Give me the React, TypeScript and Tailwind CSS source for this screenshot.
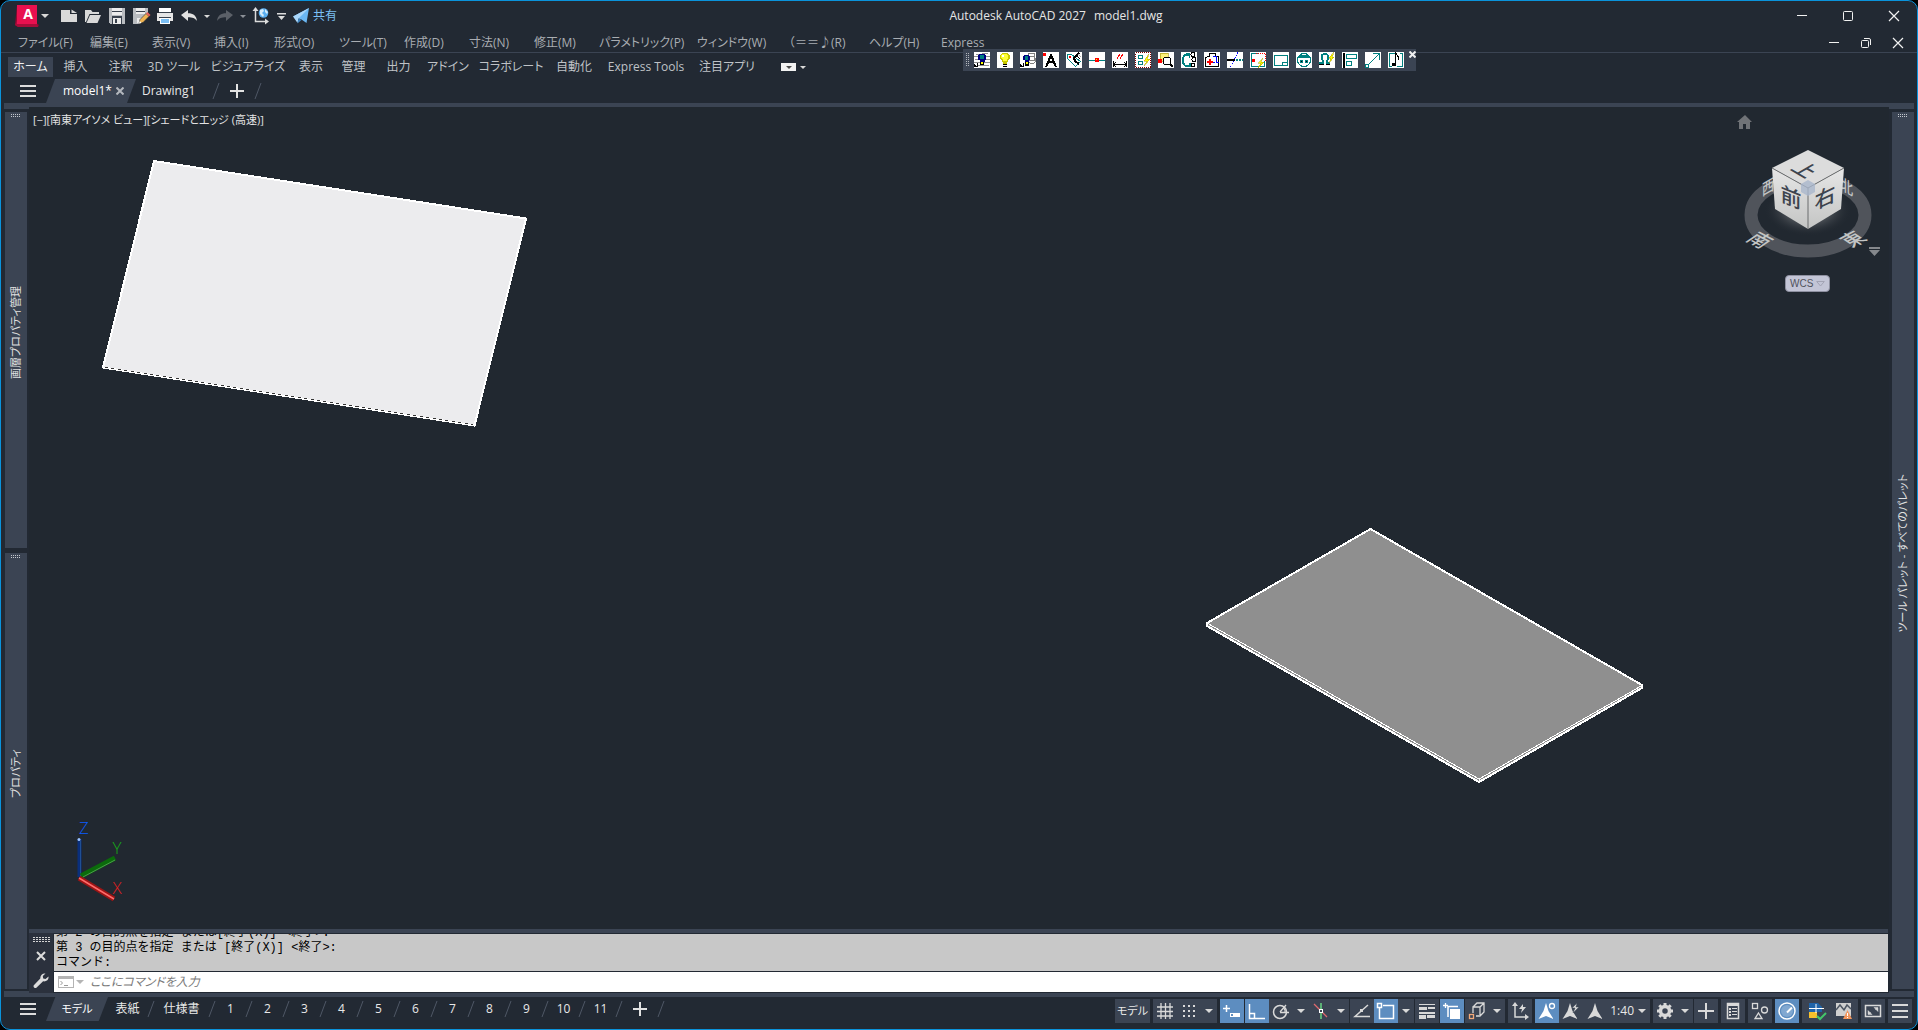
// src/App.tsx
import type { ReactNode } from "react";

const MENUS = [
  { label: "ファイル(F)", w: "w-[72px]" },
  { label: "編集(E)", w: "w-[62px]" },
  { label: "表示(V)", w: "w-[62px]" },
  { label: "挿入(I)", w: "w-[60px]" },
  { label: "形式(O)", w: "w-[65px]" },
  { label: "ツール(T)", w: "w-[65px]" },
  { label: "作成(D)", w: "w-[65px]" },
  { label: "寸法(N)", w: "w-[65px]" },
  { label: "修正(M)", w: "w-[65px]" },
  { label: "パラメトリック(P)", w: "w-[98px]" },
  { label: "ウィンドウ(W)", w: "w-[86px]" },
  { label: "（＝＝♪(R)", w: "w-[86px]", wide: true },
  { label: "ヘルプ(H)", w: "w-[72px]" },
  { label: "Express", w: "w-[72px]" },
];

const RIBBON = [
  { label: "ホーム", w: "w-[45px]" },
  { label: "挿入", w: "w-[45px]" },
  { label: "注釈", w: "w-[45px]" },
  { label: "3D ツール", w: "w-[62px]" },
  { label: "ビジュアライズ", w: "w-[86px]" },
  { label: "表示", w: "w-[40px]" },
  { label: "管理", w: "w-[45px]" },
  { label: "出力", w: "w-[45px]" },
  { label: "アドイン", w: "w-[54px]" },
  { label: "コラボレート", w: "w-[72px]" },
  { label: "自動化", w: "w-[54px]" },
  { label: "Express Tools", w: "w-[90px]" },
  { label: "注目アプリ", w: "w-[72px]" },
];

const LAYOUTS = ["1", "2", "3", "4", "5", "6", "7", "8", "9", "10", "11"];

/* ---------- shared bits ---------- */

function Icon({ children, crisp }: { children: ReactNode; crisp?: boolean }) {
  return (
    <svg
      viewBox="0 0 24 24"
      className="h-6 w-6 shrink-0"
      fill="none"
      stroke="none"
      shapeRendering={crisp ? "crispEdges" : "auto"}
      aria-hidden="true"
    >
      {children}
    </svg>
  );
}

function Caret({ color = "#d9d9d9", small }: { color?: string; small?: boolean }) {
  return (
    <svg
      viewBox="0 0 8 4"
      className={small ? "h-[3px] w-[6px]" : "h-1 w-2"}
      aria-hidden="true"
    >
      <path d="M0 0h8L4 4z" fill={color} />
    </svg>
  );
}

function Slash() {
  return (
    <svg viewBox="0 0 8 16" className="h-4 w-2 shrink-0" aria-hidden="true">
      <path d="M1 16L7 0" stroke="#4f5866" strokeWidth="1" />
    </svg>
  );
}

function Burger({ label }: { label: string }) {
  return (
    <button
      aria-label={label}
      className="flex h-6 w-[45px] shrink-0 items-center justify-center pl-[9px]"
    >
      <svg viewBox="0 0 16 12" className="h-3 w-4" shapeRendering="crispEdges">
        <path d="M0 0h16v2H0zM0 5h16v2H0zM0 10h16v2H0z" fill="#dcdcdc" />
      </svg>
    </button>
  );
}

function Plus() {
  return (
    <svg viewBox="0 0 14 14" className="h-[14px] w-[14px]" shapeRendering="crispEdges">
      <path d="M6 0h2v14H6zM0 6h14v2H0z" fill="#e2e2e2" />
    </svg>
  );
}

function Grip({ color = "#c5c9cf" }: { color?: string }) {
  return (
    <svg viewBox="0 0 10 4" className="h-1 w-[10px]" shapeRendering="crispEdges">
      {[0, 2, 4, 6, 8].map((x) => (
        <g key={x} fill={color}>
          <rect x={x} y="0" width="1" height="1" />
          <rect x={x} y="2" width="1" height="1" />
        </g>
      ))}
    </svg>
  );
}

/* ---------- title bar ---------- */

function TitleBar() {
  return (
    <header className="flex h-[30px] items-center">
      <div className="flex w-[49.5%] items-center pl-[14px]">
        <button aria-label="アプリケーション メニュー" className="flex items-center">
          <svg viewBox="0 0 24 22" className="h-[22px] w-6">
            <path d="M2 0h20v18.500L24 20l-1 2H3L0 20z" fill="#8d0a30" />
            <path d="M2 0h20v19H2z" fill="#e8104f" />
            <path d="M0 20l2-5v4h20l1 3H3z" fill="#a70d3a" />
            <text
              x="13"
              y="14"
              textAnchor="middle"
              fontSize="14"
              fontWeight="700"
              fill="#fff"
              className="font-['Open_Sans',sans-serif]"
            >
              A
            </text>
          </svg>
          <span className="flex w-3 justify-center">
            <Caret />
          </span>
        </button>
        <div className="flex items-center pl-[6px]">
          <button aria-label="新規">
            <Icon>
              <path d="M4 6h9v4h7v8H4z" fill="#d9d9d9" />
              <path d="M14.500 5.500L20 9h-5.500z" fill="#d9d9d9" />
            </Icon>
          </button>
          <button aria-label="開く">
            <Icon>
              <path d="M4 6h6l1.500 2H18v2H8.500L5 18H4z" fill="#d9d9d9" />
              <path d="M9 11h11l-3.500 8H5.500z" fill="#d9d9d9" />
            </Icon>
          </button>
          <button aria-label="上書き保存">
            <Icon crisp>
              <path d="M4 4h16v16H5l-1-1z" fill="#b9bcc0" />
              <path d="M7 4h10v7H7z" fill="#ececec" />
              <path d="M7 7h10v1H7zM7 12h10v8H7z" fill="#39414d" />
              <path d="M8 14h8v6H8z" fill="#ececec" />
              <path d="M10 15h2v4h-2z" fill="#39414d" />
            </Icon>
          </button>
          <button aria-label="名前を付けて保存">
            <Icon>
              <path d="M4 4h15v8l-8 8H4z" fill="#b9bcc0" />
              <path d="M7 4h9v6H7zM8 14h5l-2 5H8z" fill="#ececec" />
              <path d="M7 7h9v1H7z" fill="#39414d" />
              <path d="M10 19.500l1-4 6-6 3 3-6 6z" fill="#f0b452" stroke="#222933" strokeWidth=".6" />
              <path d="M17 9.500l1.500-1.500 3 3L20 12.500z" fill="#e8605a" />
              <path d="M10 19.500l.7-2.500 1.800 1.800z" fill="#fff" />
            </Icon>
          </button>
          <button aria-label="印刷">
            <Icon crisp>
              <path d="M6 4h12v4H6z" fill="#fff" />
              <path d="M4 9h16v8H4z" fill="#e6e6e6" />
              <path d="M6 8h12v1H6zM6 13h12v1H6z" fill="#39414d" />
              <path d="M7 14h10v6H7z" fill="#fff" />
              <path d="M8 15h8v4H8z" fill="#7cc0f5" />
            </Icon>
          </button>
          <button aria-label="元に戻す">
            <Icon>
              <path d="M4 11l7-5v3.200c5 0 8.500 2.300 9 7.800-2-3-4.500-3.800-9-3.800V17z" fill="#e2e2e2" />
            </Icon>
          </button>
          <button aria-label="元に戻す履歴" className="flex w-3 justify-center">
            <Caret small />
          </button>
          <button aria-label="やり直し">
            <Icon>
              <path d="M20 11l-7-5v3.200c-5 0-8.500 2.300-9 7.800 2-3 4.500-3.800 9-3.800V17z" fill="#5b6068" />
            </Icon>
          </button>
          <button aria-label="やり直し履歴" className="flex w-3 justify-center">
            <Caret small color="#8b9097" />
          </button>
          <button aria-label="地理的位置">
            <Icon>
              <path d="M6.500 5.500v12H18" stroke="#dcdcdc" strokeWidth="1.500" />
              <path d="M6.500 3L9.500 7h-6zM20 17.500L16 14.500v6z" fill="#dcdcdc" />
              <circle cx="14.500" cy="9" r="4.800" fill="#5aaef0" />
              <path d="M11 6l3-1 1 2-2 2 2 2-1 2-3-3zM16 5l3 3-1 2-2-2z" fill="#d6ecfb" />
            </Icon>
          </button>
          <button aria-label="クイック アクセスのカスタマイズ" className="flex w-4 justify-center">
            <svg viewBox="0 0 9 7" className="h-[7px] w-[9px]">
              <path d="M0 0h9v1.500H0zM1 3h7L4.500 7z" fill="#dcdcdc" />
            </svg>
          </button>
          <button className="flex items-center text-xs text-[#7cc0f5]">
            <Icon>
              <path d="M4 12.500L20 4l-2.500 15-5-3.500z" fill="#6bb7f3" />
              <path d="M4 12.500L20 4 9.500 14.500 8.500 19z" fill="#a9d6fa" />
              <path d="M8.500 19.500L9.500 14.500l3 1.500z" fill="#3f86c4" />
            </Icon>
            共有
          </button>
        </div>
      </div>
      <h1 className="flex gap-2 text-xs whitespace-nowrap text-[#e6e6e6]">
        <span>Autodesk AutoCAD 2027</span>
        <span>model1.dwg</span>
      </h1>
      <div className="ml-auto flex">
        <WindowButton label="最小化" kind="min" wide />
        <WindowButton label="最大化" kind="max" wide />
        <WindowButton label="閉じる" kind="close" wide />
      </div>
    </header>
  );
}

function WindowButton({
  label,
  kind,
  wide,
}: {
  label: string;
  kind: "min" | "max" | "restore" | "close";
  wide?: boolean;
}) {
  return (
    <button
      aria-label={label}
      className={`flex h-5 items-center justify-center ${wide ? "w-[46px]" : "w-8"}`}
    >
      <svg viewBox="0 0 12 12" className="h-3 w-3" fill="none" stroke="#f2f2f2">
        {kind === "min" && <path d="M1 5.500h10" />}
        {kind === "max" && <rect x="1.500" y="1.500" width="9" height="9" rx="1" />}
        {kind === "restore" && (
          <>
            <rect x="1.500" y="3.500" width="7" height="7" rx="1" />
            <path d="M4 1.500h5a1.500 1.500 0 0 1 1.500 1.500v5" />
          </>
        )}
        {kind === "close" && <path d="M1 1l10 10M11 1L1 11" strokeWidth="1.200" />}
      </svg>
    </button>
  );
}

/* ---------- floating toolbar ---------- */

const RED = "#ff0000";
const TEAL = "#008080";
const NAVY = "#000080";

const TOOL_ICONS: { label: string; art: ReactNode }[] = [
  {
    label: "画層の分離",
    art: (
      <>
        <path d="M0 4.500h16M1 7.500h15M0 10.500h16M3 13.500h12M2 2.500l12-1" stroke="#909090" />
        <path d="M5 2h6v1h1v5h-1v2H6V8H4V3h1z" fill={NAVY} />
        <path d="M6 3h4v4H6z" fill={TEAL} />
        <path d="M6 10h4v3H6z" fill="#000" />
        <path d="M7 10h2v2H7z" fill="#ffff00" />
        <path d="M0 12h1v1h1v1h1v-3h1v4H0z" fill="#000" />
      </>
    ),
  },
  {
    label: "画層の表示",
    art: (
      <>
        <path d="M5 1h6v1h1v1h1v4h-1v1h-1v2h-1v2H6v-2H5V8H4V7H3V3h1V2h1z" fill="#c8c800" />
        <path d="M5 2h5v1h1v4h-1v2H6V7H5V6H4V3h1z" fill="#ffff33" />
        <path d="M5 3h2v2H5z" fill="#fff" />
        <path d="M6 12h4v1H6zM6 14h4v1H6z" fill="#000" />
      </>
    ),
  },
  {
    label: "オブジェクト画層",
    art: (
      <>
        <rect x="8.500" y="1.500" width="6" height="7" stroke="#808080" />
        <circle cx="12" cy="8" r="3.500" stroke="#808080" />
        <path d="M4 3h5v1h1v4H9v2H5V8H3V4h1z" fill={NAVY} />
        <path d="M5 4h3v4H5z" fill={TEAL} />
        <path d="M5 10h4v4H5z" fill="#000" />
        <path d="M6 10h2v2H6z" fill="#ffff00" />
        <path d="M0 12h1v1h1v1h1v-3h1v4H0z" fill="#000" />
      </>
    ),
  },
  {
    label: "文字",
    art: (
      <>
        <path d="M3 15L8 3l5 12M5 10h6" stroke="#000" strokeWidth="2" />
        <rect x="0" y="1" width="3" height="3" fill={RED} />
      </>
    ),
  },
  {
    label: "タグ編集",
    art: (
      <>
        <path d="M1.500 2.500h4l9 7-5 5-8-8z" stroke={TEAL} />
        <rect x="3" y="4" width="2" height="2" fill={RED} />
        <path d="M13 1L8 6l1 3 4 3" stroke="#000" strokeWidth="2" />
        <path d="M10 3l4 4" stroke="#000" />
        <path d="M12 2l3 3" stroke="#aaa" />
      </>
    ),
  },
  {
    label: "点で分割",
    art: (
      <>
        <path d="M0 8.500h16" stroke={TEAL} />
        <rect x="6" y="6" width="4" height="4" fill={RED} />
        <rect x="7" y="7" width="1" height="1" fill="#ffff00" />
      </>
    ),
  },
  {
    label: "寸法検査",
    art: (
      <>
        <path d="M5 7l3-5M8 7l3-5" stroke={RED} />
        <path d="M1.500 9v6M14.500 9v6M2 12.500h12M4 10l-2 2.500L4 15M12 10l2 2.500-2 2.500" stroke="#000" />
      </>
    ),
  },
  {
    label: "クイック選択",
    art: (
      <>
        <rect x=".5" y=".5" width="15" height="15" stroke="#800000" strokeDasharray="1 1" />
        <path d="M3.500 3.500h4v3h-4zM3.500 9.500h4v3h-4z" stroke={TEAL} />
        <path d="M14 2l-5 7h3l-3 5 6-7h-3z" fill="#ffff00" stroke="#b0a000" strokeWidth=".5" />
      </>
    ),
  },
  {
    label: "類似検索",
    art: (
      <>
        <rect x="2" y="1" width="8" height="8" fill="#fff27a" stroke="#a09000" strokeWidth=".6" />
        <rect x="0" y="7" width="4" height="4" fill={RED} />
        <circle cx="9" cy="9" r="4" fill="#fff" stroke="#000" />
        <path d="M12 12l3 3" stroke="#000" strokeWidth="2" />
      </>
    ),
  },
  {
    label: "回転複写",
    art: (
      <>
        <path d="M6 3H4C1 6 1 11 4 13.500h4.500V11" stroke={TEAL} strokeWidth="2" />
        <path d="M5 1h4v5H8V4H5z" fill={TEAL} />
        <circle cx="12" cy="2.500" r="2" stroke="#000" />
        <circle cx="13" cy="7.500" r="2" stroke="#000" />
        <circle cx="12" cy="13" r="2" stroke="#000" />
      </>
    ),
  },
  {
    label: "ブロック追加",
    art: (
      <>
        <path d="M2.500 5.500h-1v9h13v-10h-3v-3h-6v3h-3" stroke="#000" />
        <path d="M3 9h2V7h2v2h2v2H7v2H5v-2H3z" fill={RED} />
        <path d="M9 4.500h3v6h3M9 10.500h2" stroke="#0000ff" />
      </>
    ),
  },
  {
    label: "線種変更",
    art: (
      <>
        <path d="M11 0L3 16" stroke="#0000ff" strokeDasharray="2 1" />
        <path d="M0 8h8" stroke="#000" strokeWidth="2" />
        <path d="M9 8h7" stroke={TEAL} strokeWidth="2" strokeDasharray="2 1" />
      </>
    ),
  },
  {
    label: "クイック境界",
    art: (
      <>
        <path d="M8 1.500H1.500v13h13V9" stroke={TEAL} />
        <path d="M6 1h9v8" stroke={RED} strokeDasharray="1 1" />
        <rect x="2" y="7" width="3" height="3" fill={RED} />
        <path d="M13 6l-5 5h3l-3 5 6-6h-3z" fill="#ffff00" stroke="#b0a000" strokeWidth=".5" />
      </>
    ),
  },
  {
    label: "ビューポート",
    art: (
      <>
        <path d="M1.500 3.500h13v10h-13z" stroke={TEAL} />
        <path d="M9.500 13v-3h5" stroke={TEAL} />
      </>
    ),
  },
  {
    label: "マスク",
    art: (
      <>
        <circle cx="8" cy="8" r="6.500" stroke={TEAL} />
        <path d="M3 3h10v1h1v2H2V4h1z" fill={TEAL} />
        <path d="M4 8h3v3H4zM9 8h3v3H9z" fill={TEAL} />
        <path d="M5 9h1v1H5zM10 9h1v1h-1z" fill="#000" />
      </>
    ),
  },
  {
    label: "スナップ切替",
    art: (
      <>
        <path d="M0 11h4V9C2 6 2 2 6 2s4 4 2 7v2h3" stroke={TEAL} strokeWidth="2" />
        <path d="M0 12.500h5M7 12.500h4" stroke="#000" />
        <path d="M15 0l-5 6h2l-2 5 5-6h-2z" fill="#ffff00" stroke="#b0a000" strokeWidth=".5" />
      </>
    ),
  },
  {
    label: "左揃え",
    art: (
      <>
        <path d="M1 1h2v15H1z" fill="#000" />
        <path d="M4.500 2.500h10v4h-10zM4.500 9.500h5v4h-5z" stroke={TEAL} />
      </>
    ),
  },
  {
    label: "尺度変更",
    art: (
      <>
        <path d="M3 13L14 2M8 1.500h6.500V8" stroke={TEAL} />
        <path d="M.5 12.500h3v3h-3z" fill="#fff" stroke={TEAL} />
      </>
    ),
  },
  {
    label: "サウンド",
    art: (
      <>
        <path d="M7 1.500H1.500v13H4M9 14.500h5.500v-13H12" stroke={TEAL} />
        <path d="M7.500 13V1l3 4v3" stroke="#000" />
        <path d="M4 11h4v3H4z" fill="#000" />
      </>
    ),
  },
];

function FloatingToolbar() {
  return (
    <div
      role="toolbar"
      aria-label="ユーザ ツールバー"
      className="absolute top-[48px] left-[962px] flex h-[22px] w-[453px] items-center bg-[#3b4453] pl-[3px]"
    >
      <svg viewBox="0 0 4 14" className="mr-1 h-[14px] w-1" shapeRendering="crispEdges">
        <path d="M.5 0v14M2.500 0v14" stroke="#b4b8be" strokeDasharray="1 1" />
      </svg>
      <div className="flex gap-[7px]">
        {TOOL_ICONS.map((t) => (
          <button key={t.label} aria-label={t.label} className="h-4 w-4 bg-white">
            <svg viewBox="0 0 16 16" className="h-4 w-4" fill="none" shapeRendering="crispEdges">
              {t.art}
            </svg>
          </button>
        ))}
      </div>
      <button aria-label="ツールバーを閉じる" className="ml-auto self-start pt-[2px]">
        <svg viewBox="0 0 7 7" className="h-[7px] w-[7px]">
          <path d="M.5 .5l6 6M6.500 .5l-6 6" stroke="#f0f0f0" strokeWidth="2" />
        </svg>
      </button>
    </div>
  );
}

/* ---------- side palettes ---------- */

function Palette({ title }: { title: string }) {
  return (
    <section className="flex min-h-0 w-[22px] flex-1 flex-col items-center bg-[#3b4453] pt-[2px] text-[#e0e0e0]">
      <Grip />
      <div className="flex min-h-0 flex-1 items-center">
        <h2 className="rotate-180 text-[11px] leading-[22px] whitespace-nowrap [font-feature-settings:'palt','vpal'] [text-orientation:sideways] [writing-mode:vertical-rl]">
          {title}
        </h2>
      </div>
    </section>
  );
}

/* ---------- drawing area ---------- */

function ViewCube() {
  return (
    <div className="absolute top-[4px] right-[8px] w-[150px]">
      <svg viewBox="1731 111 150 150" className="h-[150px] w-[150px]">
        <defs>
          <linearGradient id="face" x1="0" y1="0" x2="0" y2="1">
            <stop offset="0" stopColor="#e6e6e6" />
            <stop offset="1" stopColor="#c4c5c4" />
          </linearGradient>
          <radialGradient id="glow">
            <stop offset="0.500" stopColor="#4a4f55" />
            <stop offset="1" stopColor="#212830" stopOpacity="0" />
          </radialGradient>
        </defs>
        <path d="M1737 122l8-7 7 7h-2v7h-4v-5h-3v5h-4v-7z" fill="#707377" />
        <ellipse cx="1808" cy="215" rx="57" ry="36" fill="none" stroke="#50545b" strokeWidth="13" />
        <ellipse cx="1808" cy="210" rx="44" ry="26" fill="url(#glow)" />
        <g
          fill="#c2c4c4"
          fontWeight="500"
          textAnchor="middle"
          className="font-['Noto_Sans_CJK_JP',sans-serif]"
        >
          <text transform="translate(1768 187) rotate(-30) skewX(-30)" y="5" fontSize="14">
            西
          </text>
          <text transform="translate(1847 187) rotate(30) skewX(30)" y="5" fontSize="14">
            北
          </text>
          <text transform="translate(1760 240) rotate(28) skewX(-28)" y="7" fontSize="19">
            南
          </text>
          <text transform="translate(1853 239) rotate(-28) skewX(28)" y="7" fontSize="19">
            東
          </text>
        </g>
        <path d="M1808 150l36 18-36 20-36-20z" fill="#dcdcdc" />
        <path d="M1772 168l36 20v41l-33-20z" fill="url(#face)" />
        <path d="M1844 168l-36 20v41l33-20z" fill="url(#face)" />
        <path d="M1772 168l36 20 36-20M1808 188v41" fill="none" stroke="#6a6c6e" />
        <path d="M1808 180l7 4v8l-7 4-7-4v-8z" fill="#a9b6cc" fillOpacity=".8" />
        <g
          fill="#3d444e"
          fontWeight="500"
          textAnchor="middle"
          className="font-['Noto_Sans_CJK_JP',sans-serif]"
        >
          <text transform="translate(1805 170) rotate(30) skewX(-30)" y="7" fontSize="19">
            上
          </text>
          <text transform="translate(1791 198) skewY(22)" y="7" fontSize="21">
            前
          </text>
          <text transform="translate(1825 197) skewY(-25)" y="8" fontSize="21">
            右
          </text>
        </g>
        <path d="M1869 247h11v2h-11zM1869 250h11l-5.500 6z" fill="#85888c" />
      </svg>
      <button className="mt-[14px] ml-[54px] flex h-[17px] w-[45px] items-center justify-between rounded border border-[#8e90a0] bg-[#c3c5d6] px-1 font-['Liberation_Sans',sans-serif] text-[10px] text-[#50525c]">
        WCS
        <svg viewBox="0 0 9 6" className="h-[6px] w-[9px]">
          <path d="M.7 .5h7.600L4.500 5z" fill="none" stroke="#a2a4b4" />
        </svg>
      </button>
    </div>
  );
}

function Viewport() {
  return (
    <div className="relative min-h-0 flex-1 bg-[#212830]">
      <svg
        viewBox="29 107 1860 822"
        preserveAspectRatio="xMinYMin meet"
        className="absolute inset-0 h-full w-full"
        shapeRendering="crispEdges"
        fill="none"
      >
        <path d="M154 161l372 57.500-51.500 207-371.500-58z" fill="#ececee" stroke="#fff" strokeWidth="2" />
        <path d="M105 367.500l368 57" stroke="#333" strokeWidth="1" strokeDasharray="3 3.500" />
        <path
          d="M1370.500 529l271.500 156v3l-163 94-272-156v-3z"
          fill="#8f8f8f"
          stroke="#fff"
          strokeWidth="2"
          strokeLinejoin="round"
        />
        <path d="M1208 623.500l271 155.500 163-93.500M1479 779v3" stroke="#fff" strokeWidth="1" />
        <g shapeRendering="auto">
          <path d="M79.500 839v38" stroke="#0a2f7c" strokeWidth="4" />
          <path d="M80.500 841v35" stroke="#1f4f94" />
          <circle cx="79" cy="839.500" r="1.500" fill="#9cc4ff" />
          <path d="M81 876l34-18" stroke="#0b6b0b" strokeWidth="5" />
          <path d="M83 877l32-17" stroke="#4a9a4a" />
          <path d="M79 878l35 21" stroke="#9c1414" strokeWidth="5" />
          <path d="M79 878l35 21" stroke="#ff6a6a" strokeWidth="1.500" />
        </g>
        <g fontSize="17" fontWeight="300" textAnchor="middle" className="font-['Open_Sans',sans-serif]">
          <text x="84" y="834" fill="#0a5cff">
            Z
          </text>
          <text x="117" y="854" fill="#18a818">
            Y
          </text>
          <text x="117" y="894" fill="#e02020">
            X
          </text>
        </g>
      </svg>
      <p className="relative pt-[5px] pl-1 text-[11px] leading-4 text-[#e4e4e4] [font-feature-settings:'palt']">
        [−][南東アイソメ ビュー][シェードとエッジ (高速)]
      </p>
      <ViewCube />
    </div>
  );
}

function CommandLine() {
  return (
    <div className="mr-px flex h-[64px] shrink-0 border-t-4 border-[#3b4453]">
      <div className="flex w-6 shrink-0 flex-col items-center bg-[#2b313d] pt-1">
        <svg viewBox="0 0 17 5" className="h-[5px] w-[17px]" shapeRendering="crispEdges">
          <path d="M0 .5h17M0 2.500h17M0 4.500h17" stroke="#d5d5d5" strokeDasharray="2 1" />
        </svg>
        <button aria-label="閉じる" className="mt-[9px]">
          <svg viewBox="0 0 10 10" className="h-[10px] w-[10px]">
            <path d="M1 1l8 8M9 1L1 9" stroke="#dcdcdc" strokeWidth="2" />
          </svg>
        </button>
        <button aria-label="カスタマイズ" className="mt-3">
          <svg viewBox="0 0 16 16" className="h-4 w-4">
            <path
              d="M15.500 3.500l-3 2.500-2.300-.6L9.800 3 12.500.6C10 0 7 2 7.300 5.500L.8 12.300c-1 1.500 1 3.500 2.600 2.500l6.700-6.500c3.400.6 5.900-1.800 5.400-4.800z"
              fill="#dcdcdc"
            />
          </svg>
        </button>
      </div>
      <div className="flex min-w-0 flex-1 flex-col bg-[#222933] py-px pl-px">
        <div className="flex h-[37px] shrink-0 flex-col justify-end overflow-hidden bg-[#c8c8c8] pl-[2px] font-['Liberation_Mono','Noto_Sans_CJK_JP',monospace] text-[12px] leading-[15px] whitespace-pre text-black">
          <p>第 2 の目的点を指定 または[終了(X)] &lt;終了&gt;:</p>
          <p>第 3 の目的点を指定 または [終了(X)] &lt;終了&gt;:</p>
          <p>コマンド:</p>
        </div>
        <label className="mt-px flex flex-1 items-center bg-white pl-1">
          <svg viewBox="0 0 26 12" className="h-3 w-[26px]" aria-hidden="true">
            <rect x=".5" y=".5" width="15" height="11" fill="#fff" stroke="#b4b4b4" />
            <path d="M0 0h16v3H0z" fill="#b4b4b4" />
            <path d="M2.500 5l2 2-2 2M6 9.500h4" stroke="#999" fill="none" />
            <path d="M18 4h8l-4 4z" fill="#b4b4b4" />
          </svg>
          <input
            aria-label="コマンド"
            placeholder="ここにコマンドを入力"
            className="ml-[6px] h-[18px] min-w-0 flex-1 pb-[2px] text-xs text-black italic outline-none [font-feature-settings:'palt'] placeholder:text-[#7b7b7b]"
          />
        </label>
      </div>
    </div>
  );
}

/* ---------- status bar ---------- */

function Cell({ label, on, children }: { label: string; on?: boolean; children: ReactNode }) {
  return (
    <button
      aria-label={label}
      className={`flex h-6 w-6 items-center justify-center ${on ? "bg-[#5d8dc0]" : "bg-[#3b4453]"}`}
    >
      <Icon>{children}</Icon>
    </button>
  );
}

function Drop({ label }: { label: string }) {
  return (
    <button aria-label={label} className="flex h-6 w-4 items-center justify-center bg-[#3b4453]">
      <Caret />
    </button>
  );
}

function StatusBar() {
  const s = "#d9d9d9";
  return (
    <div className="mr-[5px] ml-auto flex shrink-0 gap-[3px] pt-[2px] text-[#e8e8e8]">
      <button className="h-6 w-[35px] bg-[#3b4453] text-[11px] whitespace-nowrap [font-feature-settings:'palt']">
        モデル
      </button>
      <div className="flex">
        <Cell label="グリッド">
          <path d="M4 8h16M4 12.500h16M4 17h16M8 4v16M12.500 4v16M17 4v16" stroke={s} strokeWidth="1.300" />
        </Cell>
        <Cell label="スナップ">
          {[6, 11, 16].map((y) => (
            <path key={y} d={`M6 ${y}h2v2H6zM11 ${y}h2v2h-2zM16 ${y}h2v2h-2z`} fill={s} />
          ))}
        </Cell>
        <Drop label="スナップ設定" />
      </div>
      <div className="flex gap-px">
        <Cell label="ダイナミック入力" on>
          <path d="M3 9.500h7M6.500 6v7" stroke="#fff" strokeWidth="1.500" />
          <path d="M10 14h10v4H10z" fill="#fff" />
          <path d="M11 15h2v2h-2z" fill="#5d8dc0" />
        </Cell>
        <div className="flex">
          <Cell label="直交モード" on>
            <path d="M4.500 5v14.500H20M4.500 14.500h5v5" stroke="#fff" strokeWidth="1.500" />
          </Cell>
          <Cell label="極トラッキング">
            <circle cx="11" cy="13" r="6.500" stroke={s} strokeWidth="1.500" />
            <path d="M11 13.500h9M11 13l6-7M15 9.500c1 1 1.500 2.500 1 4" stroke={s} strokeWidth="1.300" />
          </Cell>
          <Drop label="極トラッキング設定" />
          <Cell label="アイソメ作図">
            <path d="M12 4v16" stroke="#69d682" strokeWidth="1.500" />
            <path d="M5 5l13 13" stroke="#e0696e" strokeWidth="1.300" />
            <rect x="10.500" y="10.500" width="3" height="3" fill="#3b4453" stroke="#fff" />
          </Cell>
          <Drop label="アイソメ設定" />
        </div>
        <div className="flex">
          <Cell label="オブジェクト スナップ トラッキング">
            <path d="M18 6L5 17.500h15" stroke={s} strokeWidth="1.500" />
            <path d="M10 10h3v3h-3z" fill={s} />
          </Cell>
          <Cell label="オブジェクト スナップ" on>
            <path d="M9 6.500h10.500v13H5.500V9" stroke="#fff" strokeWidth="1.500" />
            <rect x="3.500" y="4.500" width="4" height="4" stroke="#fff" strokeWidth="1.500" />
          </Cell>
          <Drop label="オブジェクト スナップ設定" />
        </div>
        <Cell label="線の太さ">
          <path d="M4 5h16v1H4zM4 8h8v3H4zM13 8h7v2h-7zM4 13h16v2H4zM4 16h7v4H4zM12 16h8v3h-8z" fill={s} />
        </Cell>
        <Cell label="選択の循環" on>
          <path d="M3 6.500h5M5.500 4v5" stroke="#fff" strokeWidth="1.300" />
          <path d="M18 7.500H8V18" stroke="#fff" strokeWidth="1.500" />
          <path d="M10 10h10v10H10z" fill="#fff" />
        </Cell>
        <div className="flex">
          <Cell label="3D オブジェクト スナップ">
            <path d="M8 8l4-4h7v9l-4 4h-4M8 14V8h7v8M15 8l4-4" stroke={s} strokeWidth="1.300" />
            <rect x="4.500" y="15.500" width="4" height="4" stroke="#f3a877" strokeWidth="1.300" />
          </Cell>
          <Drop label="3D オブジェクト スナップ設定" />
        </div>
      </div>
      <Cell label="ダイナミック UCS">
        <path d="M7 6v12h11" stroke={s} strokeWidth="1.500" />
        <path d="M7 3l3 4H4zM21 18l-4 3v-6zM15 5l-4 5h3l-1 4 5-6h-3z" fill={s} />
      </Cell>
      <div className="flex bg-[#3b4453]">
        <Cell label="注釈オブジェクトを表示" on>
          <path d="M11 4l2.500 8 5 8-5-2-2.500-1-2.500 1-5 2 5-8z" fill="#fff" />
          <circle cx="17" cy="7" r="2.500" stroke="#fff" strokeWidth="1.300" />
        </Cell>
        <Cell label="自動尺度">
          <path d="M11 4l2.500 8 5 8-5-2-2.500-1-2.500 1-5 2 5-8z" fill={s} />
          <path d="M18 4l-5 5h3l-2 5 6-6h-3z" fill={s} stroke="#3b4453" strokeWidth=".5" />
        </Cell>
        <Cell label="注釈尺度">
          <path d="M12 4l2.500 8 5 8-5-2-2.500-1-2.500 1-5 2 5-8z" fill={s} />
        </Cell>
        <button className="flex h-6 items-center text-xs">
          <span className="w-[27px] text-right">1:40</span>
          <span className="flex w-4 justify-center">
            <Caret />
          </span>
        </button>
      </div>
      <div className="flex gap-px">
        <div className="flex">
          <Cell label="ワークスペース">
            <circle cx="12" cy="12" r="4.500" stroke={s} strokeWidth="3.500" />
            <path
              d="M12 4v3M12 17v3M4 12h3M17 12h3M6.300 6.300l2 2M15.700 15.700l2 2M17.700 6.300l-2 2M8.300 15.700l-2 2"
              stroke={s}
              strokeWidth="3"
            />
          </Cell>
          <Drop label="ワークスペース切り替え" />
        </div>
        <Cell label="注釈モニター">
          <path d="M4 12h16M12 4v16" stroke={s} strokeWidth="2" />
        </Cell>
      </div>
      <Cell label="クイック プロパティ">
        <rect x="6.500" y="4.500" width="11" height="15" stroke={s} strokeWidth="1.500" />
        <path d="M6 4h12v3H6zM8 9h2v2H8zM11 9h5v1h-5zM8 12h2v2H8zM11 12h5v1h-5zM8 15h2v2H8zM11 15h5v1h-5z" fill={s} />
      </Cell>
      <Cell label="選択表示">
        <rect x="4.500" y="4.500" width="5" height="5" stroke={s} strokeWidth="1.300" />
        <circle cx="16.500" cy="11" r="3" stroke={s} strokeWidth="1.300" />
        <path d="M10.500 14l3.500 5.500H7z" stroke={s} strokeWidth="1.300" />
      </Cell>
      <Cell label="グラフィックス パフォーマンス" on>
        <circle cx="12" cy="12" r="8" stroke="#fff" strokeWidth="1.500" />
        <circle cx="12" cy="12" r="6" fill="#a5c3e2" fillOpacity=".5" />
        <path d="M12 13.500l5-5" stroke="#fff" strokeWidth="2" />
      </Cell>
      <div className="flex gap-1 bg-[#3b4453] px-[2px]">
        <Cell label="図面の状態">
          <path d="M5 4h9l4 4v5H5z" fill="#1f63a8" />
          <path d="M5 13h8v6H5z" fill="#f6c02c" />
          <path d="M12 5v9M5 9.500h15" stroke="#fff" />
          <path d="M13 17l3 3 6-6" stroke="#43c76b" strokeWidth="2" />
        </Cell>
        <Cell label="システム変数モニター">
          <path d="M4 4h15v13H4z" fill="#d0d0d0" />
          <path d="M4 11l4-5 4 5 3-5 4 4" stroke="#4d5663" strokeWidth="1.500" />
          <path d="M15.500 11l4.500 9h-9z" fill="#f1955c" />
          <path d="M15 14h1v3h-1zM15 18h1v1h-1z" fill="#fff" />
        </Cell>
      </div>
      <Cell label="フルスクリーン表示">
        <rect x="4.500" y="6.500" width="15" height="11" stroke={s} strokeWidth="1.500" />
        <path d="M17 8.500v4l-4-4zM7 15.500v-4l4 4zM14 11l2-2M8 15l2-2" fill={s} stroke={s} strokeWidth=".5" />
      </Cell>
      <Cell label="カスタマイズ">
        <path d="M4 5h16v2H4zM4 11h16v2H4zM4 17h16v2H4z" fill={s} />
      </Cell>
    </div>
  );
}

/* ---------- page ---------- */

export default function App() {
  return (
    <div className="h-screen bg-black">
      <div className="relative flex h-full flex-col overflow-hidden rounded-[10px] border border-[#0a93dc] bg-[#222933] font-['Open_Sans','Noto_Sans_CJK_JP',sans-serif]">
        <TitleBar />

        <nav className="flex h-[22px] items-center border-b border-[#3b4453] pt-[2px] pl-[17px] text-xs text-[#a9adb2]">
          {MENUS.map((m) => (
            <button
              key={m.label}
              className={`shrink-0 text-left whitespace-nowrap ${m.w} ${
                m.wide ? "" : "[font-feature-settings:'palt']"
              }`}
            >
              {m.label}
            </button>
          ))}
          <div className="mr-[3px] ml-auto flex">
            <WindowButton label="図面を最小化" kind="min" />
            <WindowButton label="図面を元に戻す" kind="restore" />
            <WindowButton label="図面を閉じる" kind="close" />
          </div>
        </nav>

        <div className="flex h-[26px] items-center pt-[2px] pl-[7px] text-xs text-[#bfc2c6]">
          {RIBBON.map((r, i) => (
            <button
              key={r.label}
              className={`h-5 shrink-0 whitespace-nowrap [font-feature-settings:'palt'] ${r.w} ${
                i === 0 ? "bg-[#3b4453] text-[#f0f0f0]" : ""
              }`}
            >
              {r.label}
            </button>
          ))}
          <button aria-label="リボンの表示切り替え" className="ml-[18px] flex items-center gap-1">
            <span className="flex h-2 w-[15px] items-center justify-center bg-[#f2f2f2]">
              <Caret small color="#4a4a4a" />
            </span>
            <Caret small />
          </button>
        </div>

        <div className="flex h-6 shrink-0 items-center text-xs text-[#e8e8e8]">
          <Burger label="図面メニュー" />
          <div className="flex h-6 w-[90px] items-center bg-[#3b4453] pl-[17px] font-medium text-white [clip-path:polygon(10%_0,100%_0,90%_100%,0_100%)]">
            <button>model1*</button>
            <button aria-label="model1 を閉じる" className="ml-1">
              <svg viewBox="0 0 8 8" className="h-2 w-2">
                <path d="M.5 .5l7 7M7.500 .5l-7 7" stroke="#b4b8be" strokeWidth="2" />
              </svg>
            </button>
          </div>
          <button className="w-[76px] pl-[6px] text-left">Drawing1</button>
          <Slash />
          <button aria-label="新規図面" className="flex w-[34px] justify-center">
            <Plus />
          </button>
          <Slash />
        </div>

        <div className="mx-[3px] h-1 shrink-0 bg-[#3b4453]" />

        <main className="flex min-h-0 flex-1">
          <div className="ml-[3px] flex w-[25px] flex-col gap-[5px] border-y-2 border-[#3b4453] pt-[3px] pb-[2px] pl-px">
            <Palette title="画層プロパティ管理" />
            <Palette title="プロパティ" />
          </div>
          <div className="flex min-w-0 flex-1 flex-col">
            <Viewport />
            <CommandLine />
          </div>
          <div className="mr-[3px] flex w-[25px] flex-col items-end border-y-2 border-[#3b4453] pt-[3px] pb-[2px]">
            <Palette title="ツール パレット - すべてのパレット" />
          </div>
        </main>

        <div className="mx-[3px] h-1 shrink-0 bg-[#3b4453]" />

        <footer className="flex h-8 shrink-0 items-start text-xs text-[#e8e8e8]">
          <div className="flex h-6 items-center">
            <Burger label="レイアウト メニュー" />
            <button className="h-6 w-[62px] bg-[#3b4453] text-[11px] text-white [clip-path:polygon(15%_0,100%_0,85%_100%,0_100%)] [font-feature-settings:'palt']">
              モデル
            </button>
            <button className="w-[39px]">表紙</button>
            <Slash />
            <button className="w-[53px]">仕様書</button>
            <Slash />
            {LAYOUTS.map((n) => (
              <div key={n} className="flex items-center">
                <button className="w-[29px]">{n}</button>
                <Slash />
              </div>
            ))}
            <button aria-label="新規レイアウト" className="flex w-[34px] justify-center">
              <Plus />
            </button>
            <Slash />
          </div>
          <StatusBar />
        </footer>

        <FloatingToolbar />
      </div>
    </div>
  );
}
